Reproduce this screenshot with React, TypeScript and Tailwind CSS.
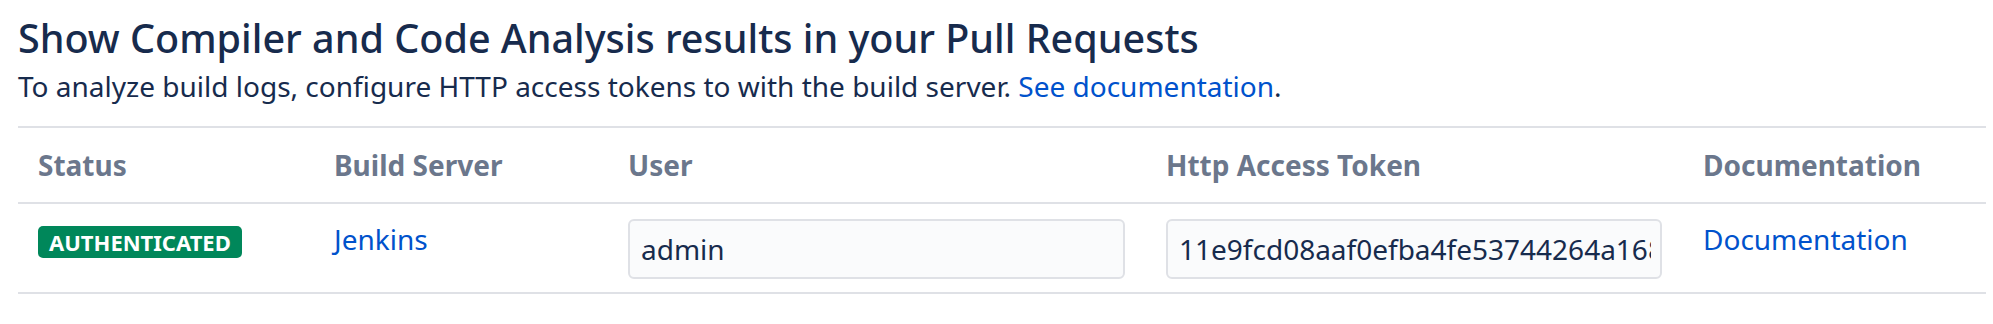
import React from "react";

const cols = "grid grid-cols-[296px_294px_538px_537px_303px]";

export default function App() {
  return (
    <div className="min-h-[324px] w-[1993px] bg-white pl-[18px] font-['Noto_Sans',sans-serif] text-[#172B4D]">
      <h2 className="pt-[14px] text-[39.5px] leading-[48px] font-medium">
        Show Compiler and Code Analysis results in your Pull Requests
      </h2>
      <p className="mt-[4px] text-[28px] leading-[40px]">
        To analyze build logs, configure HTTP access tokens to with the build server.{" "}
        <a href="#" className="text-[#0052CC]">See documentation</a>.
      </p>
      <div className="mt-[20px] w-[1968px] border-t-2 border-[#DFE1E6]">
        <div className={`${cols} h-[76px] items-center border-b-2 border-[#DFE1E6] text-[28px] leading-[40px] font-bold text-[#6B778C]`}>
          <div className="pl-[20px] pr-[21px]">Status</div>
          <div className="pl-[20px] pr-[21px]">Build Server</div>
          <div className="pl-[20px] pr-[21px]">User</div>
          <div className="pl-[20px] pr-[21px]">Http Access Token</div>
          <div className="pl-[20px] pr-[21px]">Documentation</div>
        </div>
        <div className={`${cols} h-[90px] items-start border-b-2 border-[#DFE1E6] text-[28px] leading-[40px]`}>
          <div className="flex items-start pl-[20px] pr-[21px] pt-[22px]">
            <span className="flex h-[32px] items-center rounded-[5px] bg-[#00875A] px-[11px] text-[22px] font-bold leading-none text-white">
              AUTHENTICATED
            </span>
          </div>
          <div className="pl-[20px] pr-[21px] pt-[15px]">
            <a href="#" className="text-[#0052CC]">Jenkins</a>
          </div>
          <div className="pl-[20px] pr-[21px] pt-[15px]">
            <input
              readOnly
              value="admin"
              className="block h-[60px] w-full rounded-[6px] border-2 border-[#DFE1E6] bg-[#FAFBFC] pl-[11px] pr-[9px] text-[28px] leading-[40px] text-[#172B4D] outline-none"
            />
          </div>
          <div className="pl-[20px] pr-[21px] pt-[15px]">
            <input
              readOnly
              value="11e9fcd08aaf0efba4fe53744264a168b2"
              className="block h-[60px] w-full rounded-[6px] border-2 border-[#DFE1E6] bg-[#FAFBFC] pl-[11px] pr-[9px] text-[28px] leading-[40px] text-[#172B4D] outline-none"
            />
          </div>
          <div className="pl-[20px] pr-[21px] pt-[15px]">
            <a href="#" className="text-[#0052CC]">Documentation</a>
          </div>
        </div>
      </div>
    </div>
  );
}
